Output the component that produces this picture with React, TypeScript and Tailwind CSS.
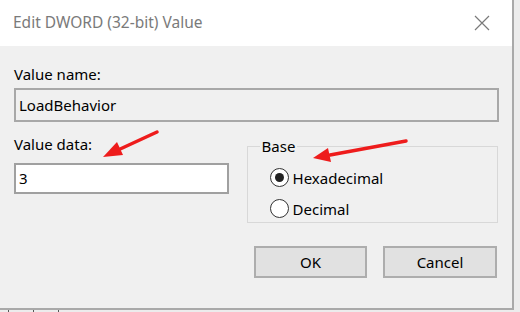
import React from "react";

function Radio({ checked, label }: { checked?: boolean; label: string }) {
  return (
    <div className="flex items-center h-[31px]">
      <div className="w-[19px] h-[19px] rounded-full border-[1.5px] border-[#333333] bg-white flex items-center justify-center">
        {checked && <div className="w-[9px] h-[9px] rounded-full bg-[#222222]" />}
      </div>
      <span className="ml-[4px] text-[15px] text-black leading-[20px]">{label}</span>
    </div>
  );
}

export default function App() {
  return (
    <div
      className="relative w-[520px] h-[312px] bg-[#e6e6e6] overflow-hidden flex flex-col"
      style={{ fontFamily: '"Noto Sans", "Open Sans", sans-serif' }}
    >
      <div className="flex h-[310px]">
        <div className="w-[514px] h-[310px] border-r-2 border-b-2 border-[#a9a9a9] flex flex-col">
          <div className="h-[46px] bg-white flex items-center justify-between pl-[13px] pr-[22px] shrink-0">
            <span className="text-[15.5px] text-[#7a7a7a]">Edit DWORD (32-bit) Value</span>
            <svg width="16" height="16" viewBox="0 0 16 16">
              <path d="M1 1 L15 15 M15 1 L1 15" stroke="#7a7a7a" strokeWidth="1.2" />
            </svg>
          </div>
          <div className="flex-1 bg-[#f0f0f0] px-[14px] pt-[18px] flex flex-col">
            <div className="text-[15px] leading-[20px] text-black">Value name:</div>
            <div className="mt-[4px] h-[34px] w-[485px] border-2 border-[#a8a8a8] bg-[#f0f0f0] flex items-center pl-[3px] text-[15px] text-black">
              LoadBehavior
            </div>
            <div className="mt-[12px] flex">
              <div className="w-[215px] flex flex-col">
                <div className="text-[15px] leading-[20px] text-black">Value data:</div>
                <div className="mt-[9px] h-[31px] border-2 border-[#a0a0a0] bg-white flex items-center pl-[3px] text-[15px] text-black">
                  3
                </div>
              </div>
              <fieldset className="ml-[18px] w-[252px] h-[87px] mt-[2px] border border-[#d8d8d8]">
                <legend className="ml-[12px] px-[2px] text-[15px] leading-[20px] text-black">Base</legend>
                <div className="pl-[22px] pt-[6px] flex flex-col">
                  <Radio checked label="Hexadecimal" />
                  <Radio label="Decimal" />
                </div>
              </fieldset>
            </div>
            <div className="mt-[23px] flex justify-end pr-[1px] gap-[16px]">
              <div className="w-[113px] h-[32px] bg-[#e1e1e1] border-2 border-[#adadad] flex items-center justify-center text-[15px] text-black">
                OK
              </div>
              <div className="w-[114px] h-[32px] bg-[#e1e1e1] border-2 border-[#adadad] flex items-center justify-center text-[15px] text-black">
                Cancel
              </div>
            </div>
          </div>
        </div>
        <div className="flex-1 bg-[#ececec]" />
      </div>
      <div className="h-[2px] flex bg-[#ececec]">
        <div className="ml-[8px] w-[1px] bg-[#555555]" />
        <div className="ml-[24px] w-[1px] bg-[#555555]" />
        <div className="ml-[24px] w-[1px] bg-[#555555]" />
      </div>
      <svg className="absolute left-0 top-0 pointer-events-none" width="520" height="312" viewBox="0 0 520 312">
        <line x1="157" y1="132" x2="118" y2="150" stroke="#ee1c1c" strokeWidth="3.5" strokeLinecap="round" />
        <polygon points="103,157 117,142 123,155" fill="#ee1c1c" />
        <line x1="406" y1="141" x2="330" y2="155" stroke="#ee1c1c" strokeWidth="3.5" strokeLinecap="round" />
        <polygon points="313,158 328,148 331,162" fill="#ee1c1c" />
      </svg>
    </div>
  );
}
